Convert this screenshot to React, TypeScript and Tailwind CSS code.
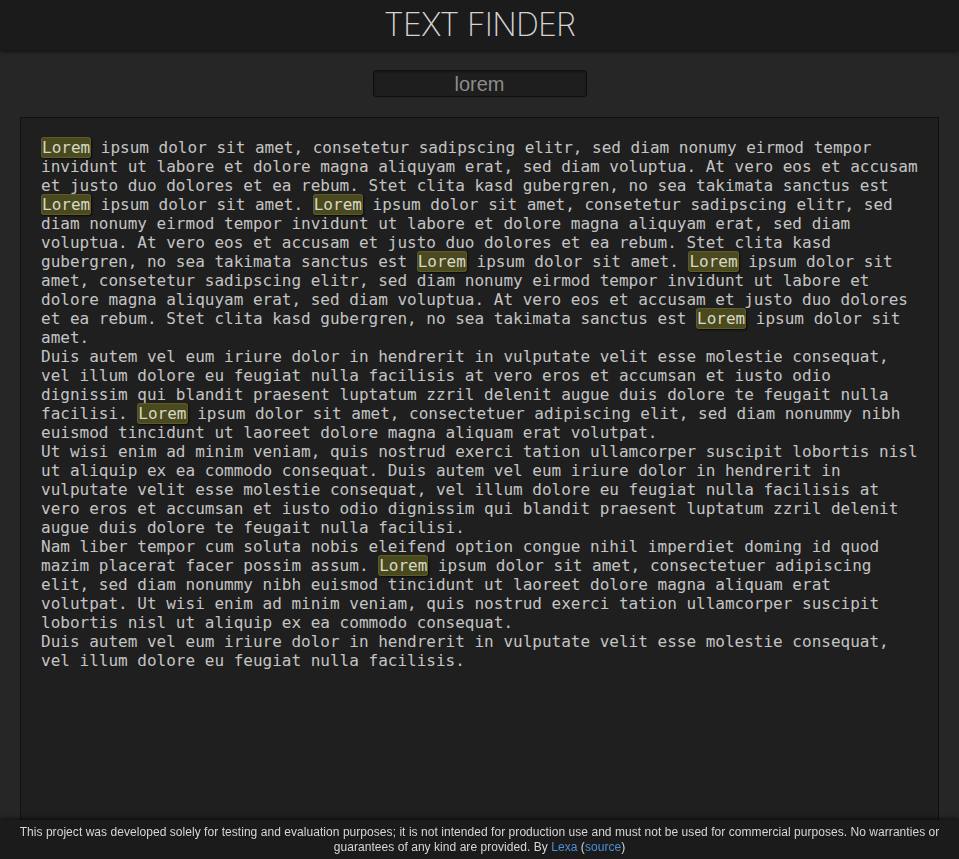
import { Fragment } from "react";

const paragraphs = [
  "Lorem ipsum dolor sit amet, consetetur sadipscing elitr, sed diam nonumy eirmod tempor invidunt ut labore et dolore magna aliquyam erat, sed diam voluptua. At vero eos et accusam et justo duo dolores et ea rebum. Stet clita kasd gubergren, no sea takimata sanctus est Lorem ipsum dolor sit amet. Lorem ipsum dolor sit amet, consetetur sadipscing elitr, sed diam nonumy eirmod tempor invidunt ut labore et dolore magna aliquyam erat, sed diam voluptua. At vero eos et accusam et justo duo dolores et ea rebum. Stet clita kasd gubergren, no sea takimata sanctus est Lorem ipsum dolor sit amet. Lorem ipsum dolor sit amet, consetetur sadipscing elitr, sed diam nonumy eirmod tempor invidunt ut labore et dolore magna aliquyam erat, sed diam voluptua. At vero eos et accusam et justo duo dolores et ea rebum. Stet clita kasd gubergren, no sea takimata sanctus est Lorem ipsum dolor sit amet.",
  "Duis autem vel eum iriure dolor in hendrerit in vulputate velit esse molestie consequat, vel illum dolore eu feugiat nulla facilisis at vero eros et accumsan et iusto odio dignissim qui blandit praesent luptatum zzril delenit augue duis dolore te feugait nulla facilisi. Lorem ipsum dolor sit amet, consectetuer adipiscing elit, sed diam nonummy nibh euismod tincidunt ut laoreet dolore magna aliquam erat volutpat.",
  "Ut wisi enim ad minim veniam, quis nostrud exerci tation ullamcorper suscipit lobortis nisl ut aliquip ex ea commodo consequat. Duis autem vel eum iriure dolor in hendrerit in vulputate velit esse molestie consequat, vel illum dolore eu feugiat nulla facilisis at vero eros et accumsan et iusto odio dignissim qui blandit praesent luptatum zzril delenit augue duis dolore te feugait nulla facilisi.",
  "Nam liber tempor cum soluta nobis eleifend option congue nihil imperdiet doming id quod mazim placerat facer possim assum. Lorem ipsum dolor sit amet, consectetuer adipiscing elit, sed diam nonummy nibh euismod tincidunt ut laoreet dolore magna aliquam erat volutpat. Ut wisi enim ad minim veniam, quis nostrud exerci tation ullamcorper suscipit lobortis nisl ut aliquip ex ea commodo consequat.",
  "Duis autem vel eum iriure dolor in hendrerit in vulputate velit esse molestie consequat, vel illum dolore eu feugiat nulla facilisis.",
];

function Highlighted({ text, query }: { text: string; query: string }) {
  const re = new RegExp(`(${query})`, "gi");
  const parts = text.split(re);
  return (
    <>
      {parts.map((part, i) =>
        part.toLowerCase() === query.toLowerCase() ? (
          <mark
            key={i}
            className="bg-[#4a4a1e] text-[#d8d8c8] border border-[#5c5c2a] rounded-[3px] shadow-[1px_1px_2px_rgba(0,0,0,0.7)]"
          >
            {part}
          </mark>
        ) : (
          <Fragment key={i}>{part}</Fragment>
        )
      )}
    </>
  );
}

export default function App() {
  const query = "lorem";

  return (
    <div className="min-h-screen bg-[#262626] flex flex-col">
      {/* header */}
      <header className="h-[50px] bg-[#1b1b1b] shadow-[0_2px_4px_rgba(0,0,0,0.5)] flex items-center justify-center">
        <h1 className="text-[32px] font-extralight text-[#d4d4d4] font-['Inter','Roboto',sans-serif] tracking-tight leading-none">
          TEXT FINDER
        </h1>
      </header>

      {/* search */}
      <div className="flex justify-center pt-5 pb-5">
        <input
          defaultValue={query}
          className="w-[214px] h-[27px] bg-[#1e1e1e] border border-[#0f0f0f] rounded-[3px] text-center text-[20px] text-[#8c8c8c] font-['Liberation_Sans',Arial,sans-serif] shadow-[inset_0_1px_2px_rgba(0,0,0,0.4)] outline-none"
        />
      </div>

      {/* text panel */}
      <div className="mx-5 flex-1 bg-[#1f1f1f] border border-[#111111] px-5 pt-5 pb-[60px] min-h-[742px]">
        <div className="font-['DejaVu_Sans_Mono',monospace] text-[16px] leading-[19px] text-[#c4c4c4]">
          {paragraphs.map((p, i) => (
            <div key={i}>
              <Highlighted text={p} query={query} />
            </div>
          ))}
        </div>
      </div>

      {/* footer */}
      <footer className="fixed bottom-0 left-0 right-0 h-[39px] bg-[#1b1b1b] shadow-[0_-2px_4px_rgba(0,0,0,0.5)] px-[8px] flex items-center justify-center">
        <p className="text-center text-[12px] leading-[15px] tracking-[0.05px] text-[#d6d6d6] font-['Liberation_Sans',Arial,sans-serif]">
          This project was developed solely for testing and evaluation purposes; it is not intended for production use and must not be used for commercial purposes. No warranties or guarantees of any kind are provided. By{" "}
          <a href="#" className="text-[#4a90d9]">Lexa</a> (
          <a href="#" className="text-[#4a90d9]">source</a>)
        </p>
      </footer>
    </div>
  );
}
